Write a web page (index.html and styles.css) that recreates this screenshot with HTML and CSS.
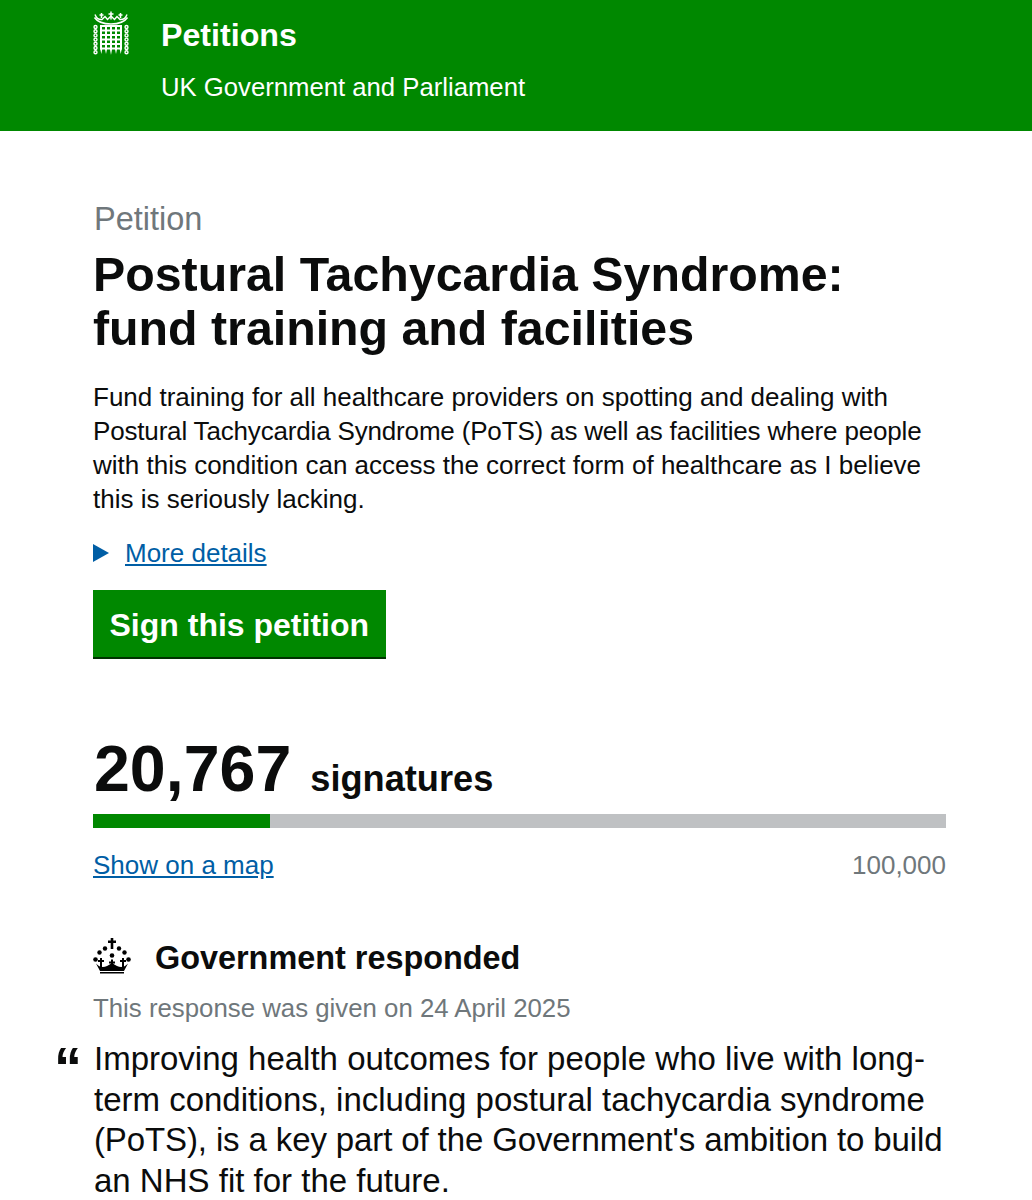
FILE: index.html
```html
<!DOCTYPE html>
<html lang="en">
<head>
<meta charset="utf-8">
<title>Petitions</title>
<link rel="stylesheet" href="styles.css">
</head>
<body>
<header class="site-header">
  <svg class="portcullis" viewBox="0 0 38 44" width="38" height="44" aria-hidden="true">
    <g fill="none" stroke="#fff" stroke-width="1.600">
      <path d="M2.500 6.500Q7 13 19 13T35.500 6.500"/>
      <path d="M3 3.500Q5 9 10 8.500L13 5.500 15.500 8.500 19 5 22.500 8.500 25 5.500 28 8.500Q33 9 35 3.500" stroke-width="1.400"/>
      <path d="M19 0.500v8M16.500 3h5M9.500 2v5M7.500 4h4M28.500 2v5M26.500 4h4" stroke-width="1.500"/>
    </g>
    <g fill="none" stroke="#fff" stroke-width="2">
      <path d="M8 15h22M8 19.500h22M8 24h22M8 28.500h22M8 33h22M8 37.500h22"/>
      <path d="M9 14v24M14 14v24M19 14v24M24 14v24M29 14v24"/>
    </g>
    <path fill="#fff" d="M8 37h2.500L9.300 43zM12.700 37h2.600L14 43zM17.700 37h2.600L19 44zM22.700 37h2.600L24 43zM27.500 37H30l-1.300 6z"/>
    <g fill="none" stroke="#fff" stroke-width="1.400">
      <circle cx="3.500" cy="16" r="1.500"/><circle cx="3.500" cy="20.200" r="1.500"/><circle cx="3.500" cy="24.400" r="1.500"/><circle cx="3.500" cy="28.600" r="1.500"/><circle cx="3.500" cy="32.800" r="1.500"/><circle cx="3.500" cy="37" r="1.500"/><circle cx="3.500" cy="41.200" r="1.500"/>
      <circle cx="34.500" cy="16" r="1.500"/><circle cx="34.500" cy="20.200" r="1.500"/><circle cx="34.500" cy="24.400" r="1.500"/><circle cx="34.500" cy="28.600" r="1.500"/><circle cx="34.500" cy="32.800" r="1.500"/><circle cx="34.500" cy="37" r="1.500"/><circle cx="34.500" cy="41.200" r="1.500"/>
    </g>
  </svg>
  <div class="header-text">
    <div class="site-name">Petitions</div>
    <div class="site-sub">UK Government and Parliament</div>
  </div>
</header>
<main class="content">
  <div class="kicker">Petition</div>
  <h1 class="title">Postural Tachycardia Syndrome:<br>fund training and facilities</h1>
  <p class="summary">Fund training for all healthcare providers on spotting and dealing with <span class="tight-summary">Postural Tachycardia Syndrome (PoTS) as well as facilities where people</span> with this condition can access the correct form of healthcare as I believe this is seriously lacking.</p>
  <div class="details"><span class="arrow"></span><a class="link" href="#">More details</a></div>
  <a class="button" href="#">Sign this petition</a>
  <div class="count-row"><span class="count">20,767</span><span class="count-label">signatures</span></div>
  <div class="bar"><div class="bar-fill" style="width:20.767%"></div></div>
  <div class="bar-meta"><a class="link" href="#">Show on a map</a><span class="target">100,000</span></div>
  <div class="response-head">
    <svg class="crown" viewBox="0 0 38 36" width="38" height="36" aria-hidden="true">
      <g fill="#000">
        <path d="M17.700 0h2.600v2.500h2.700v2.600h-2.700V11h-2.600V5.100H15V2.500h2.700z"/>
        <circle cx="12" cy="10.500" r="2.200"/><circle cx="26" cy="10.500" r="2.200"/>
        <circle cx="6.500" cy="14.500" r="2.200"/><circle cx="31.500" cy="14.500" r="2.200"/>
        <circle cx="2.500" cy="21.500" r="2.300"/><circle cx="35.500" cy="21.500" r="2.300"/>
        <circle cx="19" cy="17.500" r="2.300"/>
        <path d="M7 20h2v2h2v2H9v5H7v-5H5v-2h2zM18 21.500h2v2h2v2h-2v4h-2v-4h-2v-2h2zM29 20h2v2h2v2h-2v5h-2v-5h-2v-2h2z"/>
        <path d="M3 25.500Q8 31 14 28Q17 26.500 19 24.500Q21 26.500 24 28Q30 31 35 25.500L31 33H7z"/>
        <path d="M7 34h24v1.500H7z"/>
      </g>
    </svg>
    <h2 class="response-title">Government responded</h2>
  </div>
  <p class="response-date">This response was given on 24 April 2025</p>
  <blockquote class="quote">Improving health outcomes for people who live with long-term conditions, including postural tachycardia syndrome <span class="tight-quote">(PoTS), is a key part of the Government's ambition to build</span> an NHS fit for the future.</blockquote>
</main>
</body>
</html>
```
FILE: styles.css
```css
* { box-sizing: border-box; }
html, body { margin: 0; padding: 0; height: 1200px; overflow: hidden; background: #fff; }
body { font-family: "Liberation Sans", Arial, sans-serif; color: #0b0c0c; }
.site-header { height: 131px; background: #008800; color: #fff; display: flex; padding: 11px 0 0 92px; }
.portcullis { display: block; flex: none; }
.header-text { margin-left: 31px; }
.site-name { font-size: 32.200px; font-weight: 700; line-height: 48px; }
.site-sub { font-size: 25.700px; line-height: 30px; margin-top: 13px; }
.content { padding: 68px 86px 0 93px; position: relative; }
.kicker { font-size: 32.500px; line-height: 40px; color: #6f777b; margin-left: 1px; }
.title { margin: 8px 0 0; font-size: 48.300px; line-height: 54px; font-weight: 700; }
.summary { margin: 25px 0 0; font-size: 26px; line-height: 34px; }
.tight-summary { letter-spacing: -0.17px; }
.details { display: flex; align-items: center; margin-top: 20px; height: 34px; }
.arrow { width: 0; height: 0; border-style: solid; border-width: 9px 0 9px 16px; border-color: transparent transparent transparent #005ea5; margin-right: 16px; }
.link { color: #005ea5; font-size: 26px; line-height: 34px; text-decoration: underline; }
.button { display: inline-block; margin-top: 20px; padding: 0 16.500px; height: 69px; line-height: 70px; background: #008800; border-bottom: 2px solid #003300; color: #fff; font-size: 32px; font-weight: 700; text-decoration: none; }
.count-row { display: flex; align-items: baseline; margin-top: 75px; }
.count { font-size: 64.500px; line-height: 70px; font-weight: 700; margin-left: 1px; }
.count-label { font-size: 36.200px; font-weight: 700; margin-left: 19px; }
.bar { height: 14px; background: #bfc1c3; margin-top: 10px; }
.bar-fill { height: 100%; background: #008800; }
.bar-meta { display: flex; justify-content: space-between; margin-top: 20px; line-height: 34px; }
.target { color: #6f777b; font-size: 26px; }
.response-head { display: flex; align-items: center; margin-top: 56px; }
.crown { display: block; flex: none; margin-right: 24px; margin-bottom: 4px; }
.response-title { margin: 0; font-size: 32.400px; line-height: 40px; font-weight: 700; }
.response-date { margin: 13px 0 0; font-size: 25.800px; line-height: 34px; color: #6f777b; }
.quote { margin: 14px 0 0; padding-left: 1px; font-size: 33px; line-height: 40.500px; position: relative; }
.tight-quote { letter-spacing: -0.12px; }
.quote::before { content: "\201C"; position: absolute; left: -39px; top: -7px; font-weight: 700; font-size: 56px; line-height: 70px; }
```
